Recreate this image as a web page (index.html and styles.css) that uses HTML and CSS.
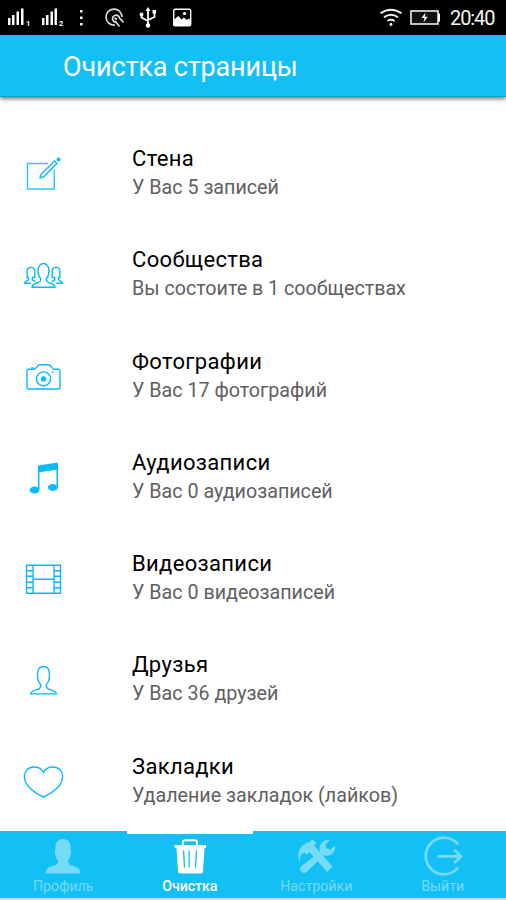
FILE: index.html
```html
<!DOCTYPE html>
<html lang="ru">
<head>
<meta charset="utf-8">
<title>Очистка страницы</title>
<link rel="stylesheet" href="styles.css">
</head>
<body>
<div class="status">
  <svg class="status-left" viewBox="0 0 200 35">
    <g fill="#fff"><path d="M8 18h2.500v7H8zM12 15h2.500v10H12zM16.500 11.500h2.500V25h-2.500zM21 8.500h2.500V25H21zM42 18h2.500v7H42zM46 15h2.500v10H46zM50.500 11.500h2.500V25h-2.500zM54.500 8.500h2.500V25h-2.500z"/>
    <path d="M80 10h2.500v2.500H80zM80 16.500h2.500V19H80zM80 23h2.500v2.500H80z"/></g>
    <text class="sim" x="26" y="26">1</text><text class="sim" x="59" y="26">2</text>
    <g fill="none" stroke="#ddd" stroke-width="1.700"><path d="M115 25A8 8 0 1 1 122 17M119.500 26.500l-4.500-5.500M117 22a3.500 3.500 0 1 1 2.500-4l4 4.500M114.500 18l2.500 1.500"/></g>
    <g fill="none" stroke="#fff" stroke-width="1.800"><path d="M148 10v15M141.500 15v2.500L148 21M154.500 13v4L148 20"/></g>
    <g fill="#fff"><path d="M145.500 11l2.500-4 2.500 4zM152.500 10h3.500v3.500h-3.500z"/><circle cx="141.500" cy="14.500" r="1.900"/><circle cx="148" cy="25.500" r="2.200"/></g>
    <rect x="173.700" y="9.200" width="17" height="16.600" rx="1.500" fill="none" stroke="#fff" stroke-width="1.400"/>
    <path d="M173.500 20l5-4 3 3.500 2.500-2 3 2.500 1.500-1.500 2.500 2V26h-17.500z" fill="#fff"/><circle cx="184.500" cy="13.500" r="1.600" fill="#fff"/>
  </svg>
  <svg class="status-right" viewBox="376 0 70 35">
    <g fill="none" stroke="#f2f2f2" stroke-width="2"><path d="M380.500 13.300q10.500-7.300 21 0M384 17.300q7-5 14 0M387.500 21q3.500-2.500 7 0"/></g><circle cx="391" cy="24.500" r="1.400" fill="#fff"/>
    <rect x="411" y="11" width="27" height="13" fill="#111" stroke="#eee" stroke-width="1.600"/><path d="M438 13.500h2v8h-2z" fill="#fff"/>
    <path d="M425.500 12.500l-4 5.500h3l-1 4.500 4.200-5.700h-3z" fill="#fff"/>
  </svg>
  <span class="clock">20:40</span>
</div>
<header class="bar"><h1>Очистка страницы</h1></header>
<main class="list">
  <section class="item">
    <svg class="icon" viewBox="20 150 48 50"><path d="M48 163.500H27.500v25.500h26.800v-19.500" opacity=".85"/><path d="M40 177.800l.8-3.300L54.500 161l2.500 2.500-13.700 13.500z"/><circle class="solid" cx="58.500" cy="159.500" r="2"/></svg>
    <div class="copy"><h2>Стена</h2><p>У Вас 5 записей</p></div>
  </section>
  <section class="item">
    <svg class="icon" viewBox="20 251.300 48 50"><path d="M32 287.600c0-3 2-3.600 5-4.300 3-.7 3.800-1.500 3.800-4.300-2.300-2.300-2.800-4.600-2.800-7.800 0-9.800 11-9.800 11 0 0 3.200-.5 5.500-2.700 7.800 0 2.800.8 3.600 3.700 4.300 3 .7 5 1.300 5 4.300zM30.800 283.500h-6.300c.5-2.200 2.300-2.300 4-3.500v-2.200h-1.400v-6.500c0-4.800 7.700-4.800 7.700 0v6.500h-2.500v2.500l3 1.300M56.200 283.500h6.300c-.5-2.200-2.300-2.300-4-3.500v-2.200h1.400v-6.500c0-4.800-7.700-4.800-7.700 0v6.500h2.500v2.500l-3 1.300"/></svg>
    <div class="copy"><h2>Сообщества</h2><p>Вы состоите в 1 сообществах</p></div>
  </section>
  <section class="item">
    <svg class="icon" viewBox="20 352.600 48 50"><path d="M28.500 368.800h5.300q1.800 0 3-2l1.200-1.700q.6-.8 2-.8h8.300q1.200 0 1.900.8l1.500 2q1 1.700 2.500 1.700h4.300q1.500 0 1.500 1.600v17q0 1.200-1.500 1.200h-30q-1.500 0-1.500-1.200v-17q0-1.600 1.500-1.600z"/><circle cx="43.500" cy="378.500" r="7"/><circle class="solid" cx="43.500" cy="378.500" r="2.700"/><path d="M31 367.500h3M52 371.800h1.500"/></svg>
    <div class="copy"><h2>Фотографии</h2><p>У Вас 17 фотографий</p></div>
  </section>
  <section class="item">
    <svg class="icon" viewBox="20 453.900 48 50"><path class="solid" d="M38 465.300l19.700-2.800v7L38 472.500z"/><path d="M38.700 467v22.500M57.200 464v22.500" stroke-width="1.500"/><ellipse class="solid" cx="34.500" cy="490" rx="5" ry="3.500"/><ellipse class="solid" cx="52.800" cy="487.300" rx="5" ry="3.500"/></svg>
    <div class="copy"><h2>Аудиозаписи</h2><p>У Вас 0 аудиозаписей</p></div>
  </section>
  <section class="item">
    <svg class="icon" viewBox="20 555.200 48 50"><path d="M26.500 565.500h34v28h-34zM33 565.500v28M54 565.500v28M33 579.500h21M26.500 571H33M26.500 576.500H33M26.500 582.500H33M26.500 588H33M54 571h6.500M54 576.500h6.500M54 582.500h6.500M54 588h6.500"/></svg>
    <div class="copy"><h2>Видеозаписи</h2><p>У Вас 0 видеозаписей</p></div>
  </section>
  <section class="item">
    <svg class="icon" viewBox="20 656.500 48 50"><path d="M30.500 694.400c.8-3 4-3.700 7.500-4.600 2.500-.6 3-1.800 2.700-5-2.500-1.500-3-4.500-3.200-9-.3-5 1.500-8.800 6-8.800s6.300 3.800 6 8.800c-.2 4.500-.7 7.500-3.200 9-.3 3.200.2 4.400 2.700 5 3.500.9 6.700 1.600 7.500 4.600z"/></svg>
    <div class="copy"><h2>Друзья</h2><p>У Вас 36 друзей</p></div>
  </section>
  <section class="item">
    <svg class="icon" viewBox="20 757.800 48 50"><path d="M43.500 772c-1.800-3.700-5.500-5.200-9.500-5.200-6 0-9.600 4.300-9.600 9.500 0 8.500 8.500 15.500 19.100 20.500 10.600-5 19.100-12 19.100-20.500 0-5.200-3.600-9.500-9.600-9.500-4 0-7.700 1.500-9.500 5.200z"/></svg>
    <div class="copy"><h2>Закладки</h2><p>Удаление закладок (лайков)</p></div>
  </section>
</main>
<nav class="tabs">
  <a class="tab"><svg viewBox="43 836 40 40"><path fill="currentColor" d="M46 873.500v-2c0-3.200 3.500-4.500 8-6 3-1 4-1.700 4-5-2-2-2.500-4-2.700-7-.8-.5-.8-3 0-3.500-.5-7 2-11 7.700-11s8.200 4 7.700 11c.8.5.8 3 0 3.500-.2 3-.7 5-2.700 7 0 3.300 1 4 4 5 4.500 1.500 8 2.800 8 6v2z"/></svg><span>Профиль</span></a>
  <a class="tab active"><svg viewBox="169.500 836 40 40"><path d="M182.500 846v-3.500q0-2.200 2.500-2.200h9q2.500 0 2.500 2.200v3.500" fill="none" stroke="currentColor" stroke-width="2"/><path fill="currentColor" fill-rule="evenodd" d="M174 845h31.500v3H204l-1.500 23.500q-.1 2-2 2h-21q-1.900 0-2-2L176 848h-2zM182.300 850.500l1 17h1.400l-1-17zM188 850.500v17h1.300v-17zM195.300 850.500l-1 17h1.400l1-17z"/></svg><span>Очистка</span></a>
  <a class="tab"><svg viewBox="296 836 40 40"><path fill="currentColor" d="M299.500 862q-3.500-10 2.500-16 4-3.500 7.500-4l2.500-3 4.300 3.800-1.800 3.200 18 20.500-5.500 5.500-17.500-20-2.800 2.500-2-1.500q-4.500.5-4.500 5.500z"/><path fill="currentColor" d="M301 871.500q-2.300-3 .5-5.500l18.500-14.500q-1.500-6.500 2.700-9.800 3.500-2.800 7.300-1.700l-4.500 4.500 1 4 4.300 1 4.200-4.200q1 5-2.500 8.200-3.500 3.300-8.500 1.800l-17 16.500q-3.500 2.500-6-.3z"/></svg><span>Настройки</span></a>
  <a class="tab"><svg viewBox="422.500 836 40 40"><g fill="none" stroke="currentColor" stroke-width="2.700"><path d="M457.800 844.500A18.300 18.300 0 1 0 457.800 867.500M437 856.300h23M453.500 849.500l7.200 6.800-7.200 6.800"/></g></svg><span>Выйти</span></a>
</nav>
</body>
</html>
```
FILE: styles.css
```css
* { box-sizing: border-box; margin: 0; padding: 0; }
body { width: 506px; height: 900px; overflow: hidden; display: flex; flex-direction: column; background: #fff; font-family: Roboto, sans-serif; }
.status { height: 35px; flex: none; display: flex; background: #000; }
.status-left { width: 200px; height: 35px; }
.status-right { width: 70px; height: 35px; margin-left: 176px; }
.sim { fill: #fff; font: bold 7.500px Roboto, sans-serif; }
.clock { margin-left: 4px; color: #f5f5f5; font-size: 20px; line-height: 37px; letter-spacing: -1.1px; white-space: nowrap; }
.bar { height: 62px; flex: none; padding-left: 63px; background: #13c0f5; border-bottom: 1px solid #109fcd; box-shadow: 0 2px 4px rgba(60, 40, 40, .65); z-index: 1; }
h1 { color: #fff; font-size: 27px; font-weight: 400; line-height: 64px; letter-spacing: -.15px; white-space: nowrap; }
.list { height: 734px; flex: none; padding-top: 27px; overflow: hidden; }
.item { height: 101.250px; display: flex; padding: 26px 0 0 20px; }
.icon { width: 48px; height: 50px; flex: none; fill: none; stroke: #0bb8ff; stroke-width: 1.400; }
.icon .solid { fill: #08baff; stroke: none; }
.copy { margin-left: 64px; white-space: nowrap; }
h2 { margin-top: -6px; font-size: 22px; font-weight: 400; line-height: 30px; letter-spacing: .33px; color: #000; }
.copy p { font-size: 19.700px; line-height: 28px; color: #606060; }
.tabs { height: 69px; flex: none; display: grid; grid-template-columns: repeat(4, 1fr); background: #13c0f5; border-bottom: 2px solid #c9dbe0; }
.tab { display: flex; flex-direction: column; align-items: center; padding-top: 5px; color: #75dbf9; }
.tab svg { width: 40px; height: 40px; }
.tab span { font-size: 14.200px; line-height: 21px; }
.tab.active { color: #fff; box-shadow: inset 0 3px #fff; }
.tab.active span { font-weight: 500; letter-spacing: -.1px; }
```
